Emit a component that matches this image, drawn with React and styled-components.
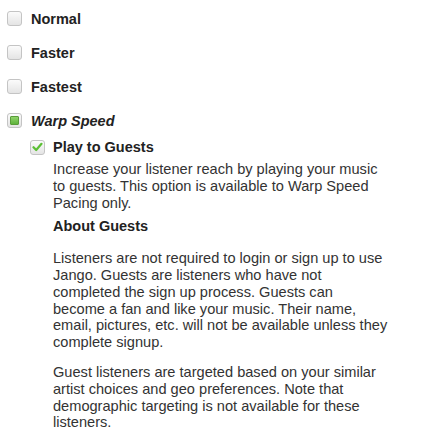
import React from "react";
import styled, { createGlobalStyle } from "styled-components";

const Global = createGlobalStyle`
  html, body { margin: 0; padding: 0; background: #fff; }
  body { font-family: "Liberation Sans", Arial, sans-serif; }
`;

const Page = styled.div`
  padding: 10px 0 0 7px;
  display: flex;
  flex-direction: column;
`;

const OptionRow = styled.label`
  display: flex;
  align-items: center;
  gap: 9px;
  height: 17px;
  margin-bottom: ${(p) => p.$mb || "17px"};
`;

const Box = styled.span`
  box-sizing: border-box;
  width: 15px;
  height: 15px;
  border: 1px solid #c4c4c4;
  border-radius: 3px;
  background: linear-gradient(#fbfbfb, #e4e4e4);
  display: flex;
  align-items: center;
  justify-content: center;
  flex: none;
`;

const Dot = styled.span`
  width: 9px;
  height: 9px;
  border-radius: 1px;
  background: linear-gradient(#8fd36a, #5fb33b);
  border: 1px solid #5a9c3a;
  box-sizing: border-box;
`;

const Label = styled.span`
  font-size: 14.5px;
  font-weight: bold;
  color: #222;
  font-style: ${(p) => (p.$italic ? "italic" : "normal")};
`;

const Sub = styled.div`
  padding-left: 23px;
  display: flex;
  flex-direction: column;
`;

const SubRow = styled.div`
  display: flex;
  align-items: center;
  gap: 8px;
  height: 16px;
`;

const Body = styled.div`
  padding-left: 23px;
  width: 337px;
  color: #333;
  font-size: 14.6px;
  line-height: 16.8px;
`;

const P = styled.p`
  margin: ${(p) => p.$m || "0"};
`;

const Heading = styled.h4`
  margin: 7px 0 0;
  font-size: 14.5px;
  font-weight: bold;
  color: #222;
  line-height: 16.8px;
`;

const Check = () => (
  <svg width="11" height="10" viewBox="0 0 11 10">
    <path d="M1.5 5.2 L4.2 8 L9.5 1.8" fill="none" stroke="#5bbf34" strokeWidth="2.2" strokeLinecap="round" strokeLinejoin="round" />
  </svg>
);

export default function App() {
  return (
    <>
      <Global />
      <Page>
        <OptionRow><Box /><Label>Normal</Label></OptionRow>
        <OptionRow><Box /><Label>Faster</Label></OptionRow>
        <OptionRow><Box /><Label>Fastest</Label></OptionRow>
        <OptionRow $mb="10px"><Box><Dot /></Box><Label $italic>Warp Speed</Label></OptionRow>
        <Sub>
          <SubRow><Box><Check /></Box><Label>Play to Guests</Label></SubRow>
          <Body>
            <P $m="6px 0 0">Increase your listener reach by playing your music to guests. This option is available to Warp Speed Pacing only.</P>
            <Heading>About Guests</Heading>
            <P $m="15px 0 0">Listeners are not required to login or sign up to use Jango. Guests are listeners who have not completed the sign up process. Guests can<br />become a fan and like your music. Their name, email, pictures, etc. will not be available unless they complete signup.</P>
            <P $m="13px 0 0">Guest listeners are targeted based on your similar artist choices and geo preferences. Note that demographic targeting is not available for these listeners.</P>
          </Body>
        </Sub>
      </Page>
    </>
  );
}
